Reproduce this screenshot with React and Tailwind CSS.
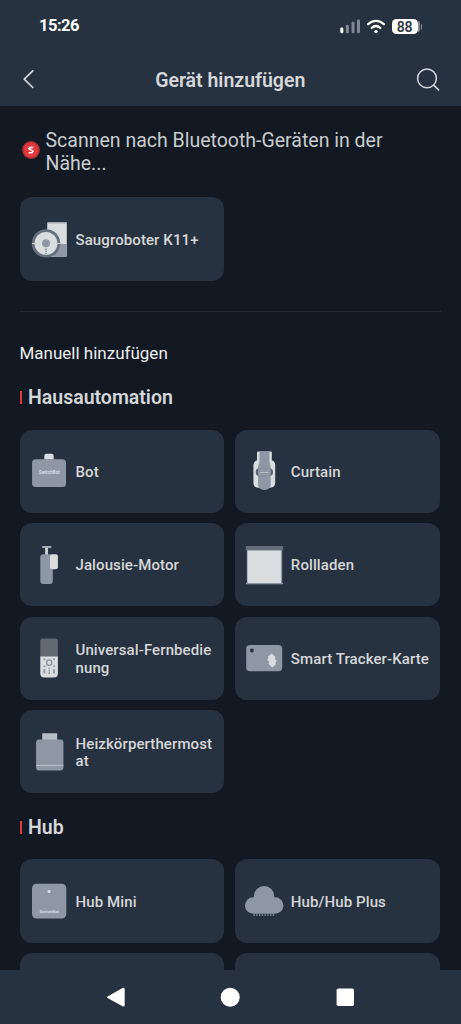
import React from 'react';

function RobotIcon() {
  return (
    <svg className="h-10 w-10 shrink-0" viewBox="0 0 40 40">
      <rect x="18.2" y="3.2" width="19.6" height="34.6" rx="1.5" fill="#d9dde0" />
      <rect x="18.2" y="3" width="19.6" height="1.6" rx="0.8" fill="#a3abb3" />
      <path d="M29 25h8.8v11.3a1.5 1.5 0 0 1-1.5 1.5H23z" fill="#8e98a5" />
      <circle cx="17" cy="24.4" r="14.2" fill="#66707c" />
      <circle cx="17" cy="24.4" r="11.4" fill="#d9dde0" />
      <path d="M3 24.6h3M28 24.6h3.2" stroke="#d9dde0" strokeWidth="0.9" />
      <circle cx="17" cy="24.2" r="4" fill="#8e98a5" />
      <path d="M17 29.4v5.6" stroke="#8e98a5" strokeWidth="1.7" strokeDasharray="1.6 0.7" />
    </svg>
  );
}

function BotIcon() {
  return (
    <svg className="h-10 w-10 shrink-0" viewBox="0 0 40 40">
      <path d="M15.3 8.6V5a2.2 2.2 0 0 1 2.2-2.2h5A2.2 2.2 0 0 1 24.7 5v3.6z" fill="#d9dde0" />
      <rect x="3.1" y="8.3" width="33.9" height="27.7" rx="3.5" fill="#8e98a5" />
      <text x="20.2" y="22.8" textAnchor="middle" fontSize="4.6" fontWeight="700" fontFamily="Roboto, sans-serif" fill="#d9dde0">SwitchBot</text>
    </svg>
  );
}

function CurtainIcon() {
  return (
    <svg className="h-10 w-10 shrink-0" viewBox="0 0 40 40">
      <path d="M13 10V1.4a1 1 0 0 1 1-1h12.8a1 1 0 0 1 1 1V10z" fill="#d9dde0" />
      <path d="M13 9.3h15q3.2 1.3 3.2 5v17.2q0 4.9-4.8 5.3H14.2q-4.8-.4-4.8-5.3V14.3q0-3.7 3.6-5z" fill="#d9dde0" />
      <path d="M15.4 0.5h10v10l1.3 5v19.5q-1.8 4-6.3 4t-6.3-4V15.5l1.3-5z" fill="#8e98a5" />
      <path d="M14.2 17.5q-2.4 0-2.4 3.6t2.4 3.6zM26.6 17.5q2.4 0 2.4 3.6t-2.4 3.6z" fill="#59636f" />
      <path d="M14 17.6h12.8M14 24.6h12.8" stroke="#7f8996" strokeWidth="0.6" />
      <text x="20.4" y="22" textAnchor="middle" fontSize="2.1" fontWeight="700" fontFamily="Roboto, sans-serif" fill="#d9dde0">SwitchBot</text>
    </svg>
  );
}

function BlindMotorIcon() {
  return (
    <svg className="h-10 w-10 shrink-0" viewBox="0 0 40 40">
      <rect x="16.2" y="2" width="2.7" height="8" fill="#d9dde0" />
      <rect x="12.9" y="0.9" width="9.6" height="2.1" rx="0.9" fill="#a3abb3" />
      <rect x="11.3" y="9.2" width="12.5" height="29.7" rx="3" fill="#8e98a5" />
      <rect x="21" y="9.2" width="7.9" height="15" rx="2" fill="#d9dde0" />
    </svg>
  );
}

function ShadeIcon() {
  return (
    <svg className="h-10 w-10 shrink-0" viewBox="0 0 40 40">
      <rect x="2.8" y="5" width="35.4" height="33.5" fill="#8e98a5" />
      <rect x="3.6" y="5.3" width="33.3" height="32.8" fill="#d9dde0" />
      <rect x="2" y="38" width="37" height="1.3" fill="#8e98a5" />
      <rect x="1.8" y="1" width="37.3" height="4.3" rx="0.5" fill="#626d79" />
    </svg>
  );
}

function RemoteIcon() {
  return (
    <svg className="h-10 w-10 shrink-0" viewBox="0 0 40 40">
      <path d="M11.3 19V3a2.5 2.5 0 0 1 2.5-2.5h12.6A2.5 2.5 0 0 1 28.9 3v16z" fill="#626973" />
      <path d="M11.3 18.5h17.6v17a4 4 0 0 1-4 4h-9.6a4 4 0 0 1-4-4z" fill="#d9dde0" />
      <circle cx="20.2" cy="24.7" r="2.6" fill="none" stroke="#8e98a5" strokeWidth="1.5" />
      <g fill="#8e98a5">
        <circle cx="15.4" cy="21.2" r="1" />
        <circle cx="25" cy="21.2" r="1" />
        <circle cx="15.4" cy="28.2" r="1" />
        <circle cx="25" cy="28.2" r="1" />
        <rect x="14.4" y="31" width="2" height="4.6" rx="0.9" />
        <rect x="24" y="31" width="2" height="4.6" rx="0.9" />
        <circle cx="20.2" cy="30.3" r="0.9" />
        <circle cx="20.2" cy="32.7" r="0.9" />
        <circle cx="20.2" cy="35" r="0.9" />
      </g>
    </svg>
  );
}

function TrackerIcon() {
  return (
    <svg className="h-10 w-10 shrink-0" viewBox="0 0 40 40">
      <rect x="2.2" y="7" width="36" height="26.2" rx="3.8" fill="#8e98a5" />
      <circle cx="7.9" cy="12.5" r="1.9" fill="#263240" />
      <path d="M27.8 15.6l3.9 3.6-1.2 1.5 2.4 2.2-1.6 1.6.6 1.7-3.6 3.2-4-3.6 1.3-1.6-2.6-2.4 1.6-1.6-.8-1.5z" fill="#d9dde0" />
    </svg>
  );
}

function ThermostatIcon() {
  return (
    <svg className="h-10 w-10 shrink-0" viewBox="0 0 40 40">
      <rect x="13.2" y="1.2" width="15" height="8" rx="0.6" fill="#b7bec5" />
      <rect x="7.1" y="7.4" width="27.3" height="31" rx="3" fill="#8e98a5" />
      <path d="M7.1 33.4h27.3" stroke="#c3c9cf" strokeWidth="0.9" />
    </svg>
  );
}

function HubMiniIcon() {
  return (
    <svg className="h-10 w-10 shrink-0" viewBox="0 0 40 40">
      <rect x="3" y="2.8" width="34.3" height="34.7" rx="4.5" fill="#8e98a5" />
      <circle cx="20" cy="10.4" r="1.6" fill="#d9dde0" />
      <text x="20.1" y="31.7" textAnchor="middle" fontSize="4.2" fontWeight="700" fontFamily="Roboto, sans-serif" fill="#d9dde0">SwitchBot</text>
    </svg>
  );
}

function CloudIcon() {
  return (
    <svg className="h-10 w-10 shrink-0" viewBox="0 0 40 40">
      <g fill="#8e98a5">
        <circle cx="20.1" cy="15.3" r="10.2" />
        <rect x="1" y="16.2" width="38.4" height="16.6" rx="8.3" />
      </g>
      <path d="M9.5 33.8h21.5" stroke="#747f8b" strokeWidth="2.3" strokeDasharray="1.4 1.35" />
    </svg>
  );
}

const homeDevices = [
  { name: 'Bot', Icon: BotIcon },
  { name: 'Curtain', Icon: CurtainIcon },
  { name: 'Jalousie-Motor', Icon: BlindMotorIcon },
  { name: 'Rollladen', Icon: ShadeIcon },
  { name: 'Universal-Fernbedienung', Icon: RemoteIcon },
  { name: 'Smart Tracker-Karte', Icon: TrackerIcon },
  { name: 'Heizkörperthermostat', Icon: ThermostatIcon },
];

const hubDevices = [
  { name: 'Hub Mini', Icon: HubMiniIcon },
  { name: 'Hub/Hub Plus', Icon: CloudIcon },
  { name: '' },
  { name: '' },
];

function DeviceCard({ name, Icon }) {
  return (
    <div className="flex h-[83.4px] items-center gap-[7px] rounded-xl bg-[#263240] pr-2 pl-[9px]">
      {Icon && <Icon />}
      <span className="min-w-0 flex-1 pt-[3px] text-[15px] leading-[17.6px] font-medium tracking-[0.1px] break-all text-[#d5d7d9]">
        {name}
      </span>
    </div>
  );
}

function DeviceGrid({ devices }) {
  return (
    <div className="grid grid-cols-2 gap-x-[10.5px] gap-y-[10.1px]">
      {devices.map((device, i) => (
        <DeviceCard key={i} {...device} />
      ))}
    </div>
  );
}

function SectionTitle({ children }) {
  return (
    <div className="flex h-6 items-center gap-[6px]">
      <span className="h-[13px] w-[2.5px] bg-[#e23a3c]" />
      <h2 className="pt-px text-[19.5px] leading-6 font-semibold text-[#d5d7da]">{children}</h2>
    </div>
  );
}

function StatusBar() {
  return (
    <div className="flex h-[53px] items-center justify-between pr-[39.5px] pl-[39px]">
      <span className="text-[16.5px] font-bold tracking-[-0.5px] text-white">15:26</span>
      <div className="flex items-center">
        <svg width="20" height="15" viewBox="0 0 20 15">
          <rect x="0.3" y="8.5" width="3" height="5.8" rx="1.2" fill="#fff" />
          <rect x="5.9" y="5.7" width="3" height="8.6" rx="1.2" fill="#7e8792" />
          <rect x="11.5" y="2.7" width="3" height="11.6" rx="1.2" fill="#7e8792" />
          <rect x="17" y="0.5" width="3" height="13.8" rx="1.2" fill="#7e8792" />
        </svg>
        <svg className="ml-[6px]" width="20" height="15" viewBox="0 0 20 15" fill="none" stroke="#fff" strokeLinecap="round">
          <path d="M2 5.3C6.6.7 13.4.7 18 5.3" strokeWidth="2.3" />
          <path d="M5.7 9c2.7-2.5 5.9-2.5 8.6 0" strokeWidth="2.3" />
          <circle cx="10" cy="12.6" r="1.7" fill="#fff" stroke="none" />
        </svg>
        <div className="ml-[6px] flex h-[15px] w-[26px] items-center justify-center rounded-[4.5px] bg-white text-[14px] leading-none font-semibold tracking-[-0.3px] text-[#333c47]">88</div>
        <span className="h-[11px] w-[2px] rounded-r bg-[#7e8792]" />
        <span className="ml-px h-[6px] w-px rounded-r bg-[#7e8792]" />
      </div>
    </div>
  );
}

function Header() {
  return (
    <div className="flex h-[53px] items-center justify-between pr-[19.5px] pl-[21px] text-[#d5d7da]">
      <svg width="20" height="22" viewBox="0 0 20 22" fill="none" stroke="currentColor" strokeWidth="1.7" strokeLinecap="round" strokeLinejoin="round">
        <path d="M11.8 1.8L3.2 10.2l8.6 8.3" />
      </svg>
      <h1 className="pt-0.5 pl-1 text-[19.5px] font-semibold">Gerät hinzufügen</h1>
      <svg width="26" height="26" viewBox="0 0 26 26" fill="none" stroke="currentColor" strokeWidth="1.5" strokeLinecap="round">
        <circle cx="12" cy="11.4" r="9.4" />
        <path d="M18.7 18.1l4.9 4.8" />
      </svg>
    </div>
  );
}

function NavBar() {
  return (
    <nav className="flex h-[54px] shrink-0 items-center justify-center gap-[94.5px] bg-[#263240] pr-px">
      <svg width="20" height="20" viewBox="0 0 20 20" fill="#fff">
        <path d="M1.6 9.4L16.5 1.1q2.2-.9 2.2 1.3V18q0 2.2-2.2 1.3L1.6 11q-1.2-.8 0-1.6z" />
      </svg>
      <svg width="20" height="20" viewBox="0 0 20 20" fill="#fff">
        <circle cx="10.2" cy="10.3" r="9.5" />
      </svg>
      <svg width="20" height="20" viewBox="0 0 20 20" fill="#fff">
        <rect x="1.6" y="1.6" width="17.4" height="17.3" rx="1.7" />
      </svg>
    </nav>
  );
}

export default function App() {
  return (
    <div className="flex h-screen flex-col overflow-hidden bg-[#121923] font-['Roboto',sans-serif]">
      <header className="shrink-0 bg-[#263240]">
        <StatusBar />
        <Header />
      </header>

      <main className="min-h-0 flex-1 overflow-hidden pr-[21.3px] pl-[19.5px]">
        <div className="flex items-start gap-[6px] pt-[23px]">
          <svg className="mt-[12px] ml-[2px] shrink-0" width="18" height="18" viewBox="0 0 18 18">
            <circle cx="9" cy="9" r="8.9" fill="#ae2f34" />
            <circle cx="9" cy="9" r="7.4" fill="#e23a3c" />
            <path d="M11.3 6.5H8L6.9 7.6 11 10.3l-1 1.4H6.6" fill="none" stroke="#fff" strokeWidth="1.5" />
          </svg>
          <p className="text-[19.5px] leading-[23px] text-[#c9ccce]">Scannen nach Bluetooth-Geräten in der Nähe...</p>
        </div>

        <div className="mt-[22.3px]">
          <DeviceGrid devices={[{ name: 'Saugroboter K11+', Icon: RobotIcon }]} />
        </div>

        <hr className="mt-[30px] -mr-px border-t border-[#242b35]" />

        <p className="mt-[31.8px] text-[17px] leading-5 text-[#eceeef]">Manuell hinzufügen</p>

        <section className="mt-[22.1px]">
          <SectionTitle>Hausautomation</SectionTitle>
          <div className="mt-5">
            <DeviceGrid devices={homeDevices} />
          </div>
        </section>

        <section className="mt-[21.8px]">
          <SectionTitle>Hub</SectionTitle>
          <div className="mt-5">
            <DeviceGrid devices={hubDevices} />
          </div>
        </section>
      </main>

      <NavBar />
    </div>
  );
}
